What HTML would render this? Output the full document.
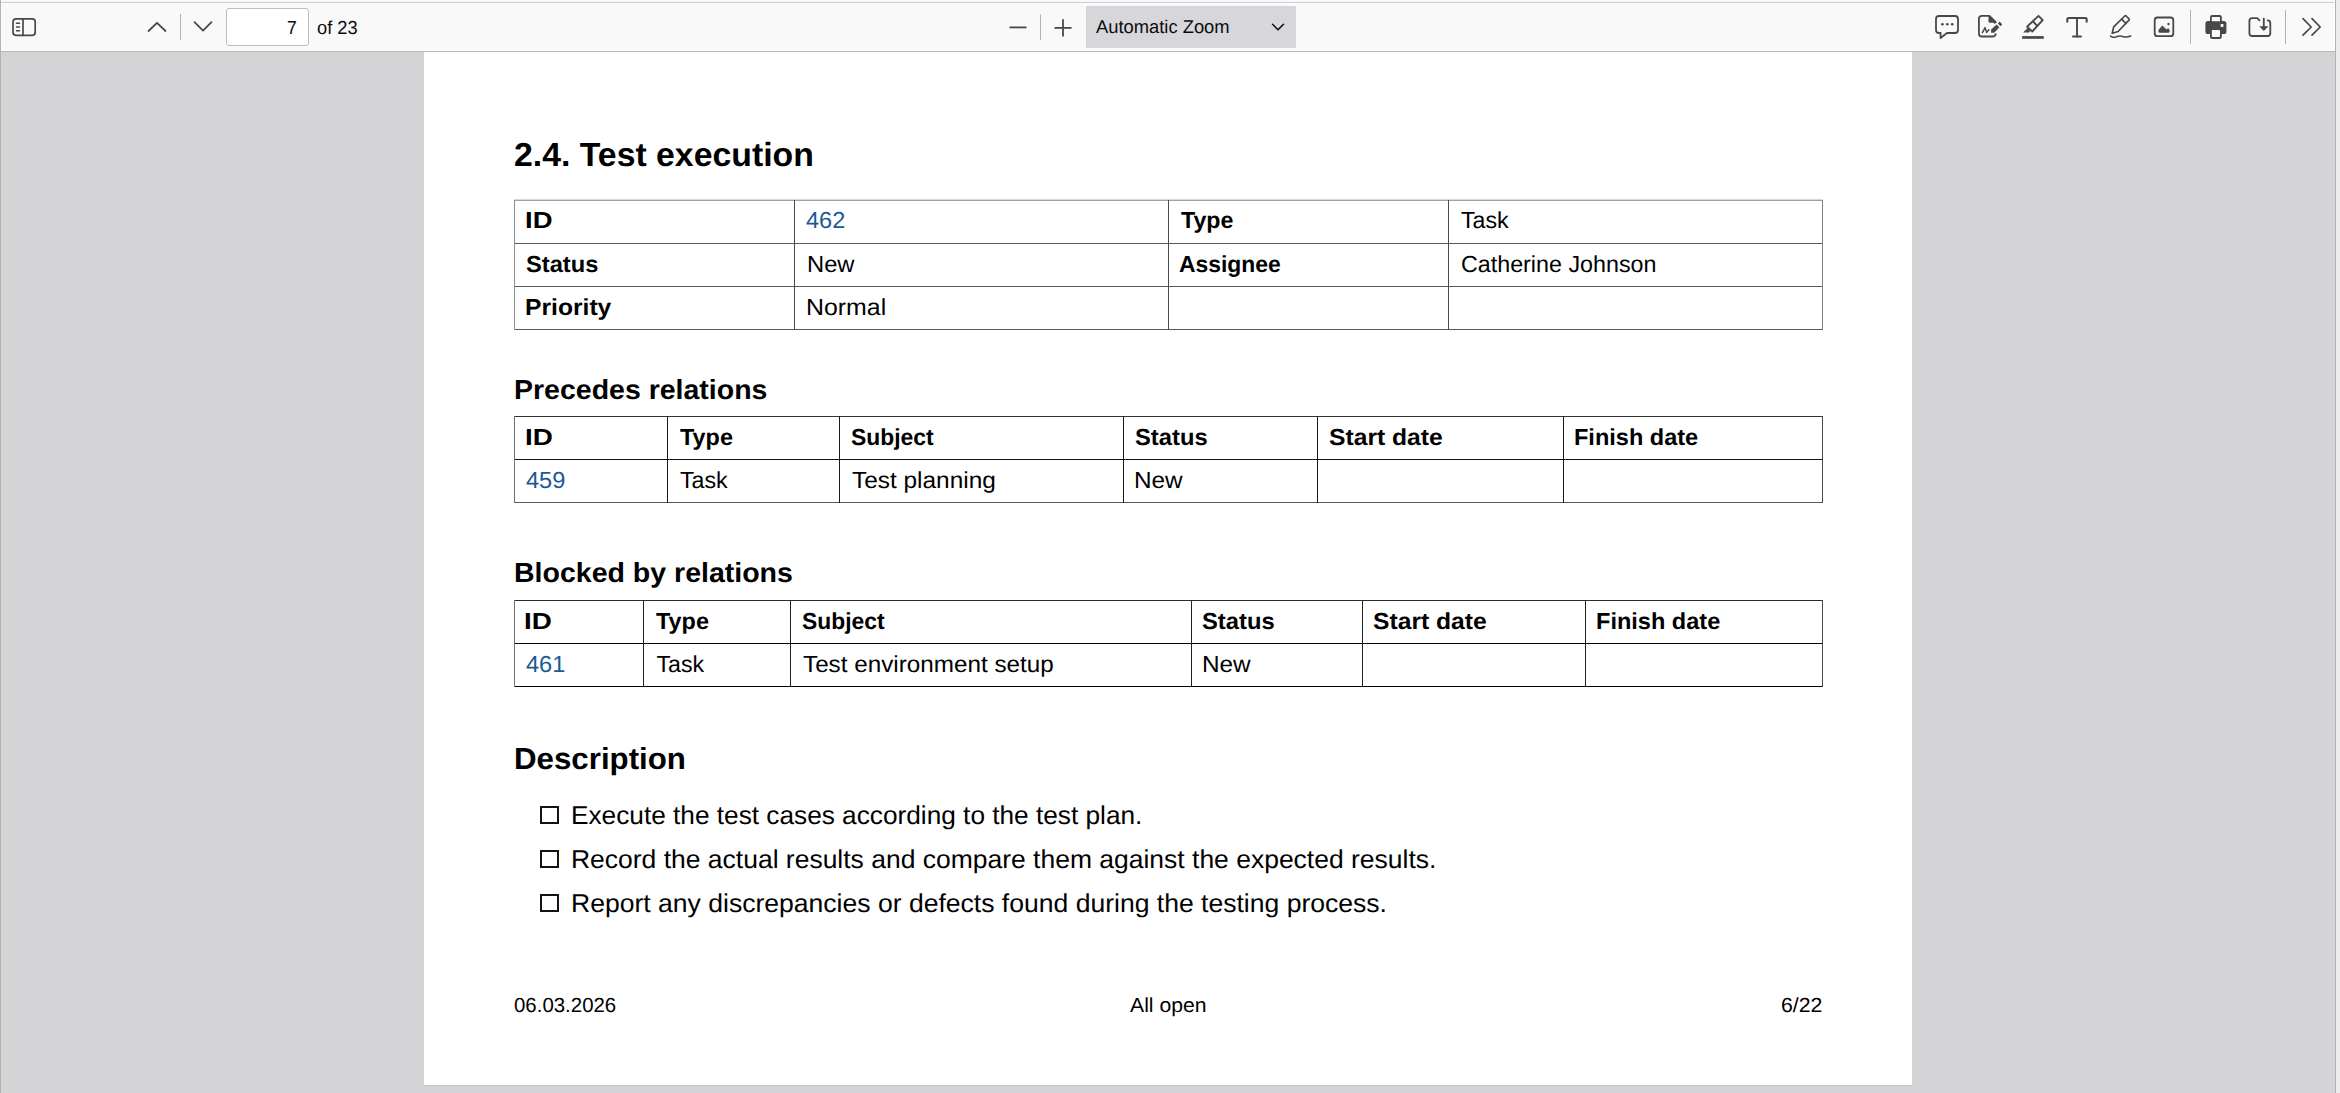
<!DOCTYPE html>
<html><head><meta charset="utf-8"><title>PDF</title>
<style>
html,body{margin:0;padding:0;}
body{width:2340px;height:1093px;overflow:hidden;position:relative;background:#d4d4d7;font-family:"Liberation Sans",sans-serif;}
.a{position:absolute;}
.t{position:absolute;white-space:pre;transform-origin:0 0;font-family:"Liberation Sans",sans-serif;text-rendering:geometricPrecision;}
.hl{position:absolute;height:1px;}
.vl{position:absolute;width:1px;}
</style></head><body>

<div class="a" style="left:0;top:0;width:2340px;height:52px;background:#f9f9f9"></div>
<div class="a" style="left:0;top:0;width:2340px;height:2px;background:#f9f9fb"></div>
<div class="a" style="left:1px;top:0;width:1px;height:52px;background:#fcfcfc"></div>
<div class="a" style="left:0;top:2px;width:2340px;height:1px;background:#cccccc"></div>
<div class="a" style="left:0;top:3px;width:2340px;height:1px;background:#fdfdfd"></div>
<div class="a" style="left:0;top:50px;width:2340px;height:1px;background:#fdfdfd"></div>
<div class="a" style="left:0;top:51px;width:2340px;height:1px;background:#b8b8b8"></div>
<div class="a" style="left:424px;top:52px;width:1488px;height:1033px;background:#fff;box-shadow:0 1px 1px rgba(0,0,0,0.06)"></div>
<div class="a" style="left:0;top:0;width:1px;height:1093px;background:#b3b3b3"></div>
<div class="a" style="left:2334px;top:0;width:1px;height:51px;background:#fdfdfd"></div>
<div class="a" style="left:2335px;top:0;width:1px;height:1093px;background:#b3b3b3"></div>
<div class="a" style="left:2336px;top:0;width:4px;height:1093px;background:#ececec"></div>
<div class="a" style="left:226px;top:8px;width:81px;height:36px;background:#fff;border:1px solid #bdbdbd;border-radius:3px"></div>
<div class="a" style="left:1086px;top:6px;width:210px;height:42px;background:#d7d7db;border-radius:1px"></div>
<div class="hl" style="left:514px;top:199px;width:1309px;background:#d8d8d8"></div>
<div class="hl" style="left:514px;top:200px;width:1309px;background:#a0a0a0"></div>
<div class="hl" style="left:514px;top:243px;width:1309px;background:#5a5a5a"></div>
<div class="hl" style="left:514px;top:286px;width:1309px;background:#5a5a5a"></div>
<div class="hl" style="left:514px;top:329px;width:1309px;background:#5a5a5a"></div>
<div class="vl" style="left:514px;top:200px;height:130px;background:#8c8c8c"></div>
<div class="vl" style="left:794px;top:200px;height:130px;background:#4a4a4a"></div>
<div class="vl" style="left:1168px;top:200px;height:130px;background:#4a4a4a"></div>
<div class="vl" style="left:1448px;top:200px;height:130px;background:#4a4a4a"></div>
<div class="vl" style="left:1822px;top:200px;height:130px;background:#808080"></div>
<div class="hl" style="left:514px;top:416px;width:1309px;background:#333"></div>
<div class="hl" style="left:514px;top:459px;width:1309px;background:#141414"></div>
<div class="hl" style="left:514px;top:502px;width:1309px;background:#5a5a5a"></div>
<div class="vl" style="left:514px;top:416px;height:87px;background:#707070"></div>
<div class="vl" style="left:667px;top:416px;height:87px;background:#1a1a1a"></div>
<div class="vl" style="left:839px;top:416px;height:87px;background:#1a1a1a"></div>
<div class="vl" style="left:1123px;top:416px;height:87px;background:#1a1a1a"></div>
<div class="vl" style="left:1317px;top:416px;height:87px;background:#1a1a1a"></div>
<div class="vl" style="left:1563px;top:416px;height:87px;background:#1a1a1a"></div>
<div class="vl" style="left:1822px;top:416px;height:87px;background:#4a4a4a"></div>
<div class="hl" style="left:514px;top:600px;width:1309px;background:#2a2a2a"></div>
<div class="hl" style="left:514px;top:643px;width:1309px;background:#050505"></div>
<div class="hl" style="left:514px;top:686px;width:1309px;background:#050505"></div>
<div class="vl" style="left:514px;top:600px;height:87px;background:#707070"></div>
<div class="vl" style="left:643px;top:600px;height:87px;background:#222"></div>
<div class="vl" style="left:790px;top:600px;height:87px;background:#222"></div>
<div class="vl" style="left:1191px;top:600px;height:87px;background:#222"></div>
<div class="vl" style="left:1362px;top:600px;height:87px;background:#222"></div>
<div class="vl" style="left:1585px;top:600px;height:87px;background:#222"></div>
<div class="vl" style="left:1822px;top:600px;height:87px;background:#4a4a4a"></div>
<div class="a" style="left:540px;top:806px;width:15px;height:14px;border:2px solid #141414"></div>
<div class="a" style="left:540px;top:850px;width:15px;height:14px;border:2px solid #141414"></div>
<div class="a" style="left:540px;top:894px;width:15px;height:14px;border:2px solid #141414"></div>
<div class="t" style="left:513.99px;top:139.0px;font-size:33.33px;line-height:33.33px;font-weight:700;color:#000;transform:scaleX(1.0137);">2.4. Test execution</div>
<div class="t" style="left:524.63px;top:209.0px;font-size:23.19px;line-height:23.19px;font-weight:700;color:#000;transform:scaleX(1.185);">ID</div>
<div class="t" style="left:805.99px;top:209.0px;font-size:23.19px;line-height:23.19px;font-weight:400;color:#1c5a94;transform:scaleX(1.0135);">462</div>
<div class="t" style="left:1181.0px;top:209.0px;font-size:23.19px;line-height:23.19px;font-weight:700;color:#000;">Type</div>
<div class="t" style="left:1461.0px;top:209.0px;font-size:23.19px;line-height:23.19px;font-weight:400;color:#000;">Task</div>
<div class="t" style="left:525.98px;top:253.0px;font-size:23.19px;line-height:23.19px;font-weight:700;color:#000;transform:scaleX(1.0203);">Status</div>
<div class="t" style="left:806.55px;top:253.0px;font-size:23.19px;line-height:23.19px;font-weight:400;color:#000;transform:scaleX(1.0227);">New</div>
<div class="t" style="left:1179.01px;top:253.0px;font-size:23.19px;line-height:23.19px;font-weight:700;color:#000;transform:scaleX(0.9871);">Assignee</div>
<div class="t" style="left:1460.75px;top:253.0px;font-size:23.19px;line-height:23.19px;font-weight:400;color:#000;transform:scaleX(1.0039);">Catherine Johnson</div>
<div class="t" style="left:524.87px;top:296.0px;font-size:23.19px;line-height:23.19px;font-weight:700;color:#000;transform:scaleX(1.0633);">Priority</div>
<div class="t" style="left:806.45px;top:296.0px;font-size:23.19px;line-height:23.19px;font-weight:400;color:#000;transform:scaleX(1.0732);">Normal</div>
<div class="t" style="left:513.93px;top:376.0px;font-size:27.54px;line-height:27.54px;font-weight:700;color:#000;transform:scaleX(1.0351);">Precedes relations</div>
<div class="t" style="left:524.6px;top:426.0px;font-size:23.19px;line-height:23.19px;font-weight:700;color:#000;transform:scaleX(1.2);">ID</div>
<div class="t" style="left:680.0px;top:426.0px;font-size:23.19px;line-height:23.19px;font-weight:700;color:#000;transform:scaleX(1.0096);">Type</div>
<div class="t" style="left:850.51px;top:426.0px;font-size:23.19px;line-height:23.19px;font-weight:700;color:#000;transform:scaleX(0.9867);">Subject</div>
<div class="t" style="left:1134.78px;top:426.0px;font-size:23.19px;line-height:23.19px;font-weight:700;color:#000;transform:scaleX(1.0246);">Status</div>
<div class="t" style="left:1328.94px;top:426.0px;font-size:23.19px;line-height:23.19px;font-weight:700;color:#000;transform:scaleX(1.0638);">Start date</div>
<div class="t" style="left:1574.27px;top:426.0px;font-size:23.19px;line-height:23.19px;font-weight:700;color:#000;transform:scaleX(1.0142);">Finish date</div>
<div class="t" style="left:525.98px;top:469.0px;font-size:23.19px;line-height:23.19px;font-weight:400;color:#1c5a94;transform:scaleX(1.0162);">459</div>
<div class="t" style="left:680.0px;top:469.0px;font-size:23.19px;line-height:23.19px;font-weight:400;color:#000;">Task</div>
<div class="t" style="left:851.5px;top:469.0px;font-size:23.19px;line-height:23.19px;font-weight:400;color:#000;transform:scaleX(1.0526);">Test planning</div>
<div class="t" style="left:1134.4px;top:469.0px;font-size:23.19px;line-height:23.19px;font-weight:400;color:#000;transform:scaleX(1.05);">New</div>
<div class="t" style="left:513.93px;top:559.0px;font-size:27.54px;line-height:27.54px;font-weight:700;color:#000;transform:scaleX(1.0357);">Blocked by relations</div>
<div class="t" style="left:524.2px;top:610.0px;font-size:23.19px;line-height:23.19px;font-weight:700;color:#000;transform:scaleX(1.2);">ID</div>
<div class="t" style="left:655.9px;top:610.0px;font-size:23.19px;line-height:23.19px;font-weight:700;color:#000;transform:scaleX(1.0096);">Type</div>
<div class="t" style="left:802.01px;top:610.0px;font-size:23.19px;line-height:23.19px;font-weight:700;color:#000;transform:scaleX(0.9867);">Subject</div>
<div class="t" style="left:1202.48px;top:610.0px;font-size:23.19px;line-height:23.19px;font-weight:700;color:#000;transform:scaleX(1.0246);">Status</div>
<div class="t" style="left:1373.34px;top:610.0px;font-size:23.19px;line-height:23.19px;font-weight:700;color:#000;transform:scaleX(1.0638);">Start date</div>
<div class="t" style="left:1596.37px;top:610.0px;font-size:23.19px;line-height:23.19px;font-weight:700;color:#000;transform:scaleX(1.015);">Finish date</div>
<div class="t" style="left:525.58px;top:653.0px;font-size:23.19px;line-height:23.19px;font-weight:400;color:#1c5a94;transform:scaleX(1.0162);">461</div>
<div class="t" style="left:656.5px;top:653.0px;font-size:23.19px;line-height:23.19px;font-weight:400;color:#000;">Task</div>
<div class="t" style="left:803.0px;top:653.0px;font-size:23.19px;line-height:23.19px;font-weight:400;color:#000;transform:scaleX(1.046);">Test environment setup</div>
<div class="t" style="left:1202.4px;top:653.0px;font-size:23.19px;line-height:23.19px;font-weight:400;color:#000;transform:scaleX(1.05);">New</div>
<div class="t" style="left:513.95px;top:744.0px;font-size:30.43px;line-height:30.43px;font-weight:700;color:#000;transform:scaleX(1.0274);">Description</div>
<div class="t" style="left:570.57px;top:803.5px;font-size:25.8px;line-height:25.8px;font-weight:400;color:#000;transform:scaleX(1.0165);">Execute the test cases according to the test plan.</div>
<div class="t" style="left:570.55px;top:847.5px;font-size:25.8px;line-height:25.8px;font-weight:400;color:#000;transform:scaleX(1.0263);">Record the actual results and compare them against the expected results.</div>
<div class="t" style="left:570.54px;top:891.5px;font-size:25.8px;line-height:25.8px;font-weight:400;color:#000;transform:scaleX(1.029);">Report any discrepancies or defects found during the testing process.</div>
<div class="t" style="left:513.59px;top:996.0px;font-size:20.29px;line-height:20.29px;font-weight:400;color:#000;transform:scaleX(1.007);">06.03.2026</div>
<div class="t" style="left:1129.8px;top:996.0px;font-size:20.29px;line-height:20.29px;font-weight:400;color:#000;transform:scaleX(1.0444);">All open</div>
<div class="t" style="left:1780.55px;top:996.0px;font-size:20.29px;line-height:20.29px;font-weight:400;color:#000;transform:scaleX(1.05);">6/22</div>
<div class="t" style="left:286.97px;top:19.0px;font-size:18.84px;line-height:18.84px;font-weight:400;color:#0c0c0d;transform:scaleX(0.9333);">7</div>
<div class="t" style="left:317.13px;top:19.0px;font-size:18.84px;line-height:18.84px;font-weight:400;color:#0c0c0d;transform:scaleX(0.97);">of 23</div>
<div class="t" style="left:1095.5px;top:17.7px;font-size:18.41px;line-height:18.41px;font-weight:400;color:#0c0c0d;transform:scaleX(0.997);">Automatic Zoom</div>
<svg class="a" style="left:0;top:0" width="2340" height="52" viewBox="0 0 2340 52">
<g fill="none" stroke="#484848" stroke-width="1.7" stroke-linecap="round" stroke-linejoin="round">
 <rect x="13" y="18.8" width="22.2" height="16.5" rx="3"/>
 <line x1="23" y1="18.8" x2="23" y2="35.3"/>
 <g stroke-width="1.35"><line x1="16.4" y1="23.25" x2="19.6" y2="23.25"/><line x1="16.4" y1="27" x2="19.6" y2="27"/><line x1="16.4" y1="30.7" x2="19.6" y2="30.7"/></g>
 <polyline points="148.5,31 157,22.8 165.5,31" stroke-width="1.8"/>
 <polyline points="194.5,22.2 203,30.6 211.5,22.2" stroke-width="1.8"/>
 <line x1="1009.5" y1="27.4" x2="1026.5" y2="27.4" stroke-width="1.8" stroke-linecap="butt"/>
 <line x1="1054.5" y1="27.9" x2="1071.5" y2="27.9" stroke-width="1.8" stroke-linecap="butt"/>
 <line x1="1063" y1="19.3" x2="1063" y2="36.6" stroke-width="1.8" stroke-linecap="butt"/>
 <polyline points="1272.5,24.2 1278,29.8 1283.5,24.2" stroke="#0c0c0d" stroke-width="1.5"/>
 <!-- comment -->
 <path d="M1939,16 H1955 Q1958,16 1958,19 V30 Q1958,33 1955,33 H1947 L1940.6,38 V33 H1939 Q1936,33 1936,30 V19 Q1936,16 1939,16 Z" stroke-width="1.8"/>
 <!-- signature doc -->
 <path d="M1995.8,22.2 L1989.4,15.9 H1982 Q1978.9,15.9 1978.9,19 V33.4 Q1978.9,36.5 1982,36.5 H1992.5 Q1995.4,36.5 1995.7,34.2" stroke-width="1.8"/>
 <path d="M1982.4,32.6 L1985.1,27.6 L1986.6,32.4 L1988.9,29.8" stroke-width="1.5"/>
 <!-- highlight -->
 <path d="M2027.1,26.6 L2038.5,15.9 L2042.7,20.2 L2032.2,31.5 Z" stroke-width="1.9"/>
 <line x1="2033.1" y1="21.5" x2="2036.8" y2="25.3" stroke-width="1.9"/>
 <!-- T -->
 <path d="M2067.3,21.8 V19.5 Q2067.3,18.1 2069,18.1 H2085 Q2086.7,18.1 2086.7,19.5 V21.8" stroke-width="2"/>
 <line x1="2077" y1="18.5" x2="2077" y2="36.5" stroke-width="1.9"/>
 <line x1="2073" y1="36.6" x2="2081" y2="36.6" stroke-width="2"/>
 <!-- pencil -->
 <path d="M2113.7,26.9 L2124.8,16 Q2125.5,15.4 2126.2,16 L2129,18.8 Q2129.6,19.5 2129,20.2 L2118.1,31.5 L2112.2,33.2 Z"/>
 <line x1="2121.6" y1="19.1" x2="2125.9" y2="23.4"/>
 <path d="M2110.6,36.2 Q2112.6,37.8 2115.8,36.9 Q2119.6,35.5 2122.6,36.4 Q2126.6,37.7 2130.6,35.9" stroke-width="1.6"/>
 <!-- image -->
 <rect x="2154.7" y="17.5" width="18.6" height="18.6" rx="2.7" stroke-width="1.8"/>
 <!-- download -->
 <path d="M2259.4,20.3 L2257.3,18.2 H2252.2 Q2249.4,18.2 2249.4,21 V33.2 Q2249.4,36 2252.2,36 H2267.5 Q2270.3,36 2270.3,33.2 V23.2 Q2270.3,20.4 2267.7,20.4" stroke-width="1.8"/>
 <line x1="2263.8" y1="18.6" x2="2263.8" y2="27.5" stroke-width="1.8"/>
 <!-- chevrons -->
 <polyline points="2303,18.7 2311.2,27 2303,35.2" stroke-width="1.7"/>
 <polyline points="2312,18.7 2320.2,27 2312,35.2" stroke-width="1.7"/>
</g>
<g fill="#484848" stroke="none">
 <circle cx="1942.4" cy="24.3" r="1.3"/><circle cx="1947.3" cy="24.3" r="1.3"/><circle cx="1952.2" cy="24.3" r="1.3"/>
 <path d="M1988.5,15.3 L1996.4,22.3 L1994.6,24 L1993.4,22.8 H1989.8 Q1988.5,22.8 1988.5,21.5 Z"/>
 <path d="M1991.1,29.6 L1996.6,24.4 L1999.4,27.2 L1994.2,32.75 H1991.1 Z"/>
 <path d="M1997.9,23.4 L1999.7,21.6 L2002.2,24.4 L2000.4,26.3 Z"/>
 <path d="M2023.1,32.6 L2027.5,28.1 L2030.3,31 L2029,32.6 Z"/>
 <rect x="2022.1" y="36.1" width="21.7" height="2.7"/>
 <path d="M2158.4,30 L2162.3,25.6 L2166.6,29.4 L2167.3,28.7 Q2168,28 2168.7,28.7 L2169.6,30 V31.6 Q2169.6,32.7 2168.5,32.7 H2159.5 Q2158.4,32.7 2158.4,31.6 Z"/>
 <circle cx="2168.5" cy="24" r="1.2"/>
 <!-- print -->
 <rect x="2210" y="15" width="11.8" height="8" rx="2.2"/>
 <rect x="2205.4" y="20.9" width="21" height="13.1" rx="2.6"/>
 <rect x="2210" y="28" width="11.8" height="10.9" rx="2.2"/>
 <!-- download arrow head -->
 <path d="M2259.2,26.2 H2268.4 L2263.8,31 Z"/>
</g>
<g fill="#f9f9f9" stroke="none">
 <rect x="2211.8" y="17" width="8.2" height="4.3" rx="0.6"/>
 <rect x="2211.8" y="29.9" width="8.2" height="7.2" rx="0.8"/>
 <rect x="2220.6" y="24" width="2.9" height="2.9" rx="0.8"/>
</g>
<g stroke="#b1b1b3" stroke-width="1">
 <line x1="180.5" y1="14" x2="180.5" y2="40"/>
 <line x1="1040.5" y1="14.5" x2="1040.5" y2="39.7"/>
 <line x1="2190.5" y1="10" x2="2190.5" y2="44"/>
 <line x1="2285.5" y1="10" x2="2285.5" y2="44"/>
</g>
</svg>
</body></html>
